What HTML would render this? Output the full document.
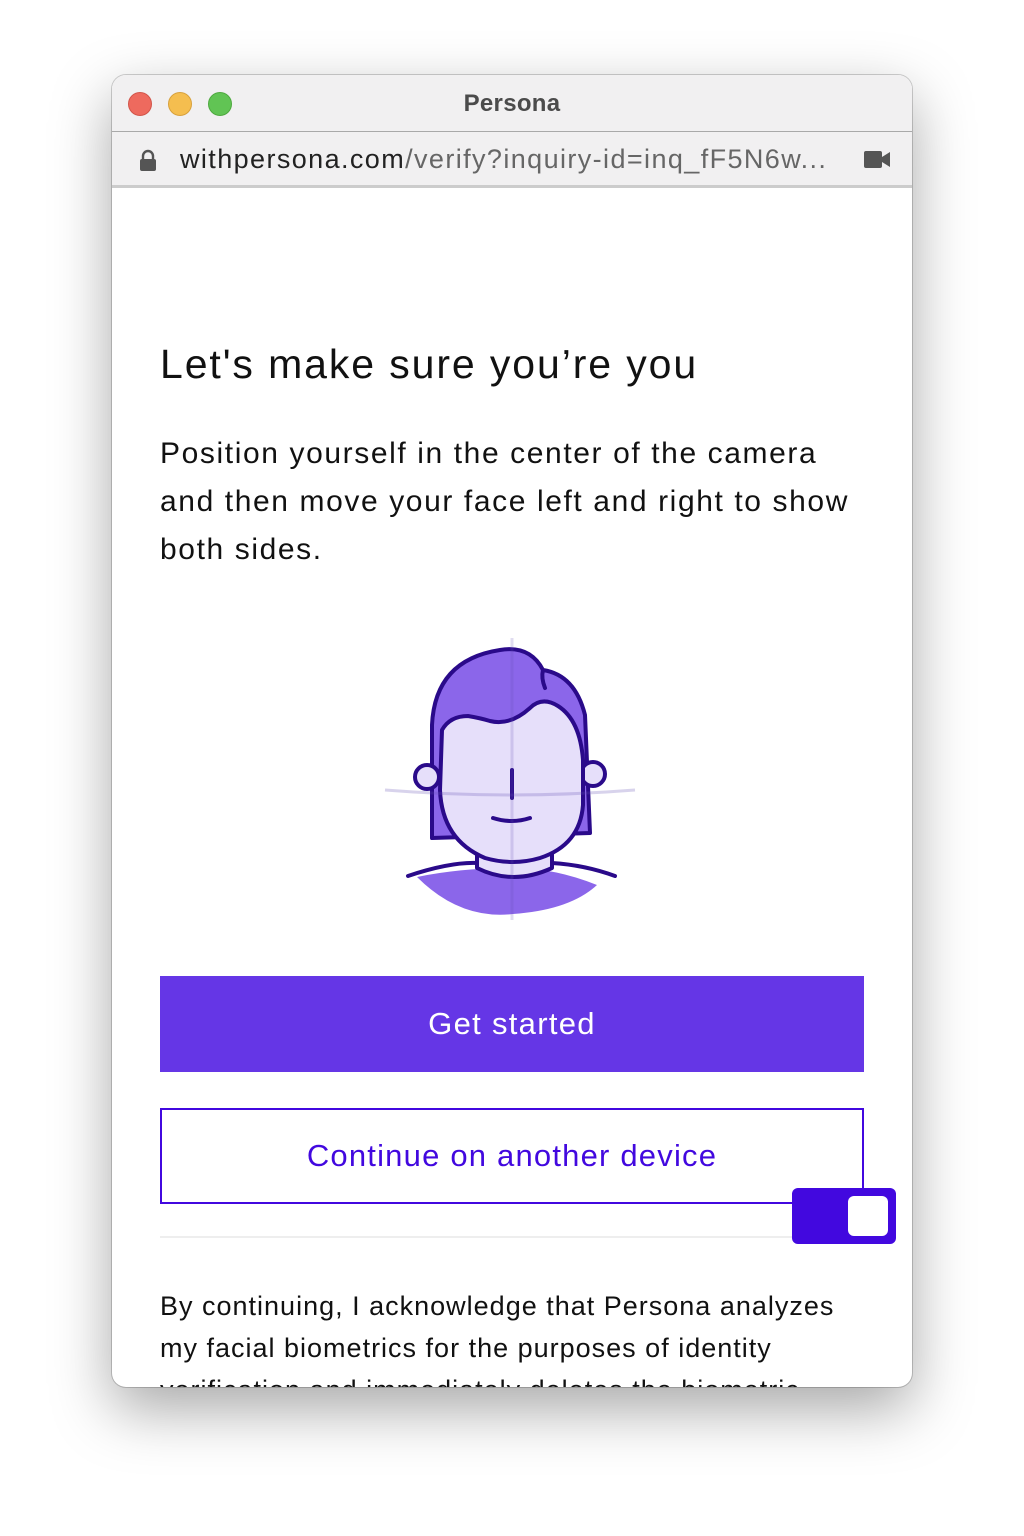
<!DOCTYPE html>
<html><head><meta charset="utf-8"><style>
*{margin:0;padding:0;box-sizing:border-box}
body{width:1024px;height:1536px;background:#fff;font-family:"Liberation Sans",sans-serif;position:relative;overflow:hidden}
.win{position:absolute;left:112px;top:75px;width:800px;height:1312px;border-radius:14px;background:#fff;overflow:hidden;box-shadow:0 22px 60px rgba(0,0,0,.35),0 0 0 1px rgba(0,0,0,.18)}
.title{height:57px;background:#f1f0f1;border-bottom:1px solid #a9a9a9;position:relative}
.dot{position:absolute;top:17px;width:24px;height:24px;border-radius:50%}
.ttl{position:absolute;left:0;right:0;top:15px;text-align:center;font-weight:bold;font-size:24px;color:#4b4b4b;letter-spacing:.3px}
.url{height:56px;background:#f1f0f1;border-bottom:3px solid #ccc;position:relative;font-size:27px;line-height:54px;letter-spacing:1.4px}
h1{position:absolute;left:48px;top:266px;font-weight:normal;font-size:41px;color:#111;letter-spacing:1.9px}
p{position:absolute;left:48px;font-size:30px;line-height:48px;color:#111;letter-spacing:1.6px}
.btn1{position:absolute;left:48px;top:901px;width:704px;height:96px;background:#6536e6;color:#fff;font-size:31px;text-align:center;line-height:96px;letter-spacing:1.3px}
.btn2{position:absolute;left:48px;top:1033px;width:704px;height:96px;border:2px solid #4208df;color:#4208df;font-size:31px;text-align:center;line-height:92px;letter-spacing:1.2px}
</style></head><body>
<div class="win">
<div class="title">
<div class="dot" style="left:16px;background:#ee6a5e;border:1px solid #d2554a"></div>
<div class="dot" style="left:56px;background:#f5be4f;border:1px solid #d8a13c"></div>
<div class="dot" style="left:96px;background:#61c454;border:1px solid #4ea93f"></div>
<div class="ttl">Persona</div>
</div>
<div class="url">
<svg style="position:absolute;left:27px;top:17px" width="18" height="22" viewBox="0 0 18 22"><path d="M4 10V7a5 5 0 0 1 10 0v3" fill="none" stroke="#555" stroke-width="2.4"/><rect x="1" y="10" width="16" height="12" rx="2" fill="#555"/></svg>
<span style="position:absolute;left:68px;color:#222">withpersona.com<span style="color:#666">/verify?inquiry-id=inq_fF5N6w...</span></span>
<svg style="position:absolute;left:752px;top:19px" width="26" height="17" viewBox="0 0 26 17"><rect x="0" y="0" width="18" height="17" rx="2" fill="#555"/><path d="M18 6l8-5v15l-8-5z" fill="#555"/></svg>
</div>
<h1>Let's make sure you’re you</h1>
<p style="top:355px">Position yourself in the center of the camera<br>and then move your face left and right to show<br>both sides.</p>
<svg style="position:absolute;left:268px;top:555px" width="260" height="300" viewBox="0 0 260 300">
<path d="M37 247 Q80 290 133 284 Q190 280 217 255 Q175 238 133 238 Q80 238 37 247Z" fill="#8b66ea"/>
<path d="M52 208 L52 95 Q55 30 120 20 Q150 15 163 40 Q195 45 205 85 L210 203Z" fill="#8b66ea" stroke="#2a0a8a" stroke-width="4" stroke-linejoin="round"/>
<circle cx="47" cy="147" r="12" fill="#e6dffa" stroke="#2a0a8a" stroke-width="4"/>
<circle cx="213" cy="144" r="12" fill="#e6dffa" stroke="#2a0a8a" stroke-width="4"/>
<path d="M97 215 L97 238 Q133 256 172 238 L172 215Z" fill="#e6dffa" stroke="#2a0a8a" stroke-width="4" stroke-linejoin="round"/>
<path d="M62 100 Q70 86 88 86 Q100 88 110 91 Q130 96 150 78 Q162 66 178 76 Q200 90 203 130 L203 175 Q200 215 160 228 Q133 236 105 228 Q62 210 60 160 Z" fill="#e6dffa" stroke="#2a0a8a" stroke-width="4" stroke-linejoin="round"/>
<path d="M165 58 Q161 48 163 40" fill="none" stroke="#2a0a8a" stroke-width="4" stroke-linecap="round"/>
<path d="M132 140 V168" stroke="#2a0a8a" stroke-width="4" stroke-linecap="round"/>
<path d="M113 188 Q132 194 150 188" fill="none" stroke="#2a0a8a" stroke-width="4" stroke-linecap="round"/>
<path d="M28 246 Q70 232 97 233 M172 233 Q205 235 235 246" fill="none" stroke="#2a0a8a" stroke-width="4" stroke-linecap="round"/>
<path d="M5 160 Q130 170 255 160" stroke="rgba(100,80,180,.25)" stroke-width="3" fill="none"/>
<path d="M132 8 V290" stroke="rgba(100,80,180,.2)" stroke-width="3"/>
</svg>
<div class="btn1">Get started</div>
<div class="btn2">Continue on another device</div>
<div style="position:absolute;left:48px;top:1161px;width:640px;height:2px;background:#eee"></div>
<div style="position:absolute;left:680px;top:1113px;width:104px;height:56px;background:#4208df;border-radius:6px"><div style="position:absolute;left:56px;top:8px;width:40px;height:40px;background:#fff;border-radius:6px"></div></div>
<p style="top:1210px;font-size:27px;line-height:42px;letter-spacing:1px">By continuing, I acknowledge that Persona analyzes<br>my facial biometrics for the purposes of identity<br>verification and immediately deletes the biometric</p>
</div>
</body></html>
